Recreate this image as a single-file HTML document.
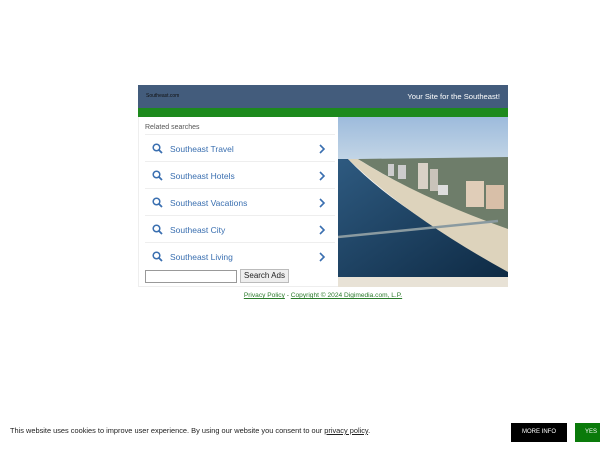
<!DOCTYPE html>
<html><head><meta charset="utf-8"><style>
*{margin:0;padding:0;box-sizing:border-box}
body{width:600px;height:450px;background:#fff;font-family:"Liberation Sans",sans-serif;position:relative;overflow:hidden}
.hdr{position:absolute;left:138px;top:85px;width:370px;height:23px;background:#435c7c}
.hdr .l{position:absolute;left:8px;top:8px;font-size:5px;color:#111}
.hdr .r{position:absolute;right:8px;top:7px;font-size:7.6px;color:#fff}
.grn{position:absolute;left:138px;top:108px;width:370px;height:9px;background:#1d8a1d}
.left{position:absolute;left:138px;top:117px;width:200px;height:170px;border-left:1px solid #eee;border-bottom:1px solid #eee}
.rel{position:absolute;left:6px;top:7px;font-size:7px;color:#555}
.row{position:absolute;left:6px;width:190px;height:26px;border-top:1px solid #eee}
.row span{position:absolute;left:25px;top:9px;font-size:8.5px;color:#3a6fb0}
.row svg{position:absolute}
.inp{position:absolute;left:6px;top:153px;width:92px;height:13px;border:1px solid #999}
.btn{position:absolute;left:101px;top:152px;width:49px;height:14px;border:1px solid #bbb;background:#eee;font-size:8px;text-align:center;line-height:12px;color:#222}
.img{position:absolute;left:338px;top:117px;width:170px;height:160px;overflow:hidden}
.beige{position:absolute;left:338px;top:277px;width:170px;height:10px;background:#e8e2d6}
.foot{position:absolute;left:138px;width:370px;top:292px;text-align:center;font-size:6.6px;color:#2a7a2a}
.foot u{color:#2a7a2a}
.ck{position:absolute;left:10px;top:426px;font-size:7.4px;color:#222}
.mi{position:absolute;left:511px;top:423px;width:56px;height:19px;background:#000;color:#fff;font-size:6px;text-align:center;line-height:19px}
.yes{position:absolute;left:575px;top:423px;width:30px;height:19px;background:#0a7a0a;color:#fff;font-size:6px;line-height:19px;padding-left:10px}
</style></head><body>
<div class="hdr"><div class="l">Southeast.com</div><div class="r">Your Site for the Southeast!</div></div>
<div class="grn"></div>
<div class="left">
<div class="rel">Related searches</div>
<div class="row" style="top:17px"><svg style="left:7px;top:8px" width="11" height="11" viewBox="0 0 11 11"><circle cx="4.5" cy="4.5" r="3.3" fill="none" stroke="#3a6fb0" stroke-width="1.5"/><path d="M7 7l3 3" stroke="#3a6fb0" stroke-width="1.8"/></svg><span>Southeast Travel</span><svg style="left:174px;top:9px" width="7" height="10"><path d="M1 1l4 4-4 4" fill="none" stroke="#3a6fb0" stroke-width="1.6"/></svg></div>
<div class="row" style="top:44px"><svg style="left:7px;top:8px" width="11" height="11" viewBox="0 0 11 11"><circle cx="4.5" cy="4.5" r="3.3" fill="none" stroke="#3a6fb0" stroke-width="1.5"/><path d="M7 7l3 3" stroke="#3a6fb0" stroke-width="1.8"/></svg><span>Southeast Hotels</span><svg style="left:174px;top:9px" width="7" height="10"><path d="M1 1l4 4-4 4" fill="none" stroke="#3a6fb0" stroke-width="1.6"/></svg></div>
<div class="row" style="top:71px"><svg style="left:7px;top:8px" width="11" height="11" viewBox="0 0 11 11"><circle cx="4.5" cy="4.5" r="3.3" fill="none" stroke="#3a6fb0" stroke-width="1.5"/><path d="M7 7l3 3" stroke="#3a6fb0" stroke-width="1.8"/></svg><span>Southeast Vacations</span><svg style="left:174px;top:9px" width="7" height="10"><path d="M1 1l4 4-4 4" fill="none" stroke="#3a6fb0" stroke-width="1.6"/></svg></div>
<div class="row" style="top:98px"><svg style="left:7px;top:8px" width="11" height="11" viewBox="0 0 11 11"><circle cx="4.5" cy="4.5" r="3.3" fill="none" stroke="#3a6fb0" stroke-width="1.5"/><path d="M7 7l3 3" stroke="#3a6fb0" stroke-width="1.8"/></svg><span>Southeast City</span><svg style="left:174px;top:9px" width="7" height="10"><path d="M1 1l4 4-4 4" fill="none" stroke="#3a6fb0" stroke-width="1.6"/></svg></div>
<div class="row" style="top:125px"><svg style="left:7px;top:8px" width="11" height="11" viewBox="0 0 11 11"><circle cx="4.5" cy="4.5" r="3.3" fill="none" stroke="#3a6fb0" stroke-width="1.5"/><path d="M7 7l3 3" stroke="#3a6fb0" stroke-width="1.8"/></svg><span>Southeast Living</span><svg style="left:174px;top:9px" width="7" height="10"><path d="M1 1l4 4-4 4" fill="none" stroke="#3a6fb0" stroke-width="1.6"/></svg></div>
<div class="inp"></div><div class="btn">Search Ads</div>
</div>
<div class="img"><svg width="170" height="160" viewBox="0 0 170 160">
<defs><linearGradient id="s" x1="0" y1="0" x2="0" y2="1"><stop offset="0" stop-color="#9dbbdc"/><stop offset="1" stop-color="#c4d6e6"/></linearGradient>
<linearGradient id="w" x1="0" y1="0" x2="1" y2="1"><stop offset="0" stop-color="#2e5a80"/><stop offset="1" stop-color="#0e2a44"/></linearGradient></defs>
<rect width="170" height="44" fill="url(#s)"/>
<path d="M0 42 L10 42 Q60 95 170 150 L170 160 L0 160Z" fill="url(#w)"/>
<path d="M10 42 L20 42 Q70 75 170 110 L170 155 Q70 100 10 42Z" fill="#ddd3bc"/>
<path d="M20 42 L170 40 L170 112 Q80 80 20 42Z" fill="#6e7d6a"/>
<rect x="80" y="46" width="10" height="26" fill="#d9d1c6"/><rect x="92" y="52" width="8" height="22" fill="#c9c3ba"/>
<rect x="128" y="64" width="18" height="26" fill="#e0cdb8"/><rect x="148" y="68" width="18" height="24" fill="#d8bfa8"/>
<rect x="100" y="68" width="10" height="10" fill="#ddd"/><rect x="50" y="47" width="6" height="12" fill="#ccc"/><rect x="60" y="48" width="8" height="14" fill="#ccc"/>
<path d="M0 120 L160 104" stroke="#8a9aa0" stroke-width="2.5"/>
</svg></div>
<div class="beige"></div>
<div class="foot"><u>Privacy Policy</u> - <u>Copyright © 2024 Digimedia.com, L.P.</u></div>
<div class="ck">This website uses cookies to improve user experience. By using our website you consent to our <u>privacy policy</u>.</div>
<div class="mi">MORE INFO</div><div class="yes">YES</div>
</body></html>
